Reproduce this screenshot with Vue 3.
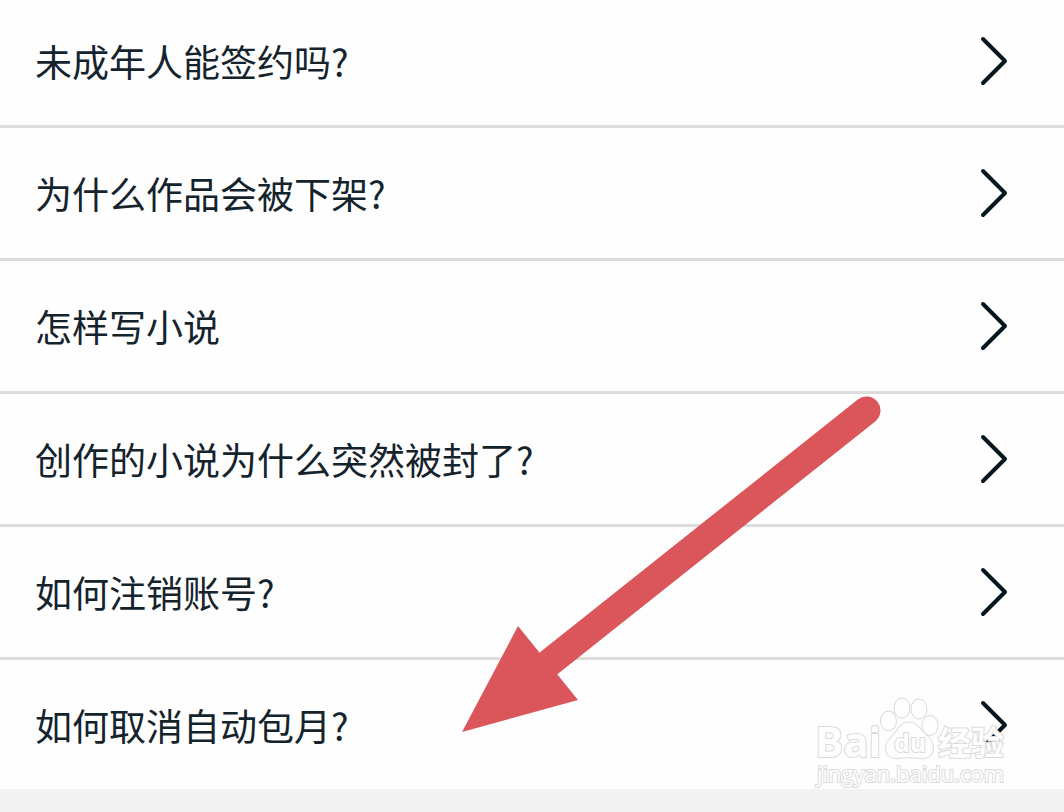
<script setup>
const questions = [
  '未成年人能签约吗?',
  '为什么作品会被下架?',
  '怎样写小说',
  '创作的小说为什么突然被封了?',
  '如何注销账号?',
  '如何取消自动包月?',
]
</script>

<template>
  <main class="page">
    <ul class="list">
      <li v-for="question in questions" :key="question" class="item">
        <a class="row" href="#">
          <span class="label">{{ question }}</span>
          <svg class="chevron" viewBox="0 0 28 48" aria-hidden="true">
            <path d="M3 2 L25 24 L3 46" />
          </svg>
        </a>
      </li>
    </ul>

    <svg class="pointer" viewBox="0 0 420 337" aria-hidden="true">
      <path class="shaft" d="M87 268 L404.5 15.5" />
      <path class="head" d="M0 337 L56 231 L77 257 L95 279 L116 305 Z" />
    </svg>

    <svg class="watermark" viewBox="0 0 200 104" role="img" aria-label="Baidu 经验">
      <ellipse cx="76.5" cy="29" rx="7.5" ry="9.5" />
      <ellipse cx="90" cy="16" rx="7.5" ry="9.5" />
      <ellipse cx="107" cy="17" rx="7.5" ry="9.5" />
      <ellipse cx="118" cy="33.5" rx="7.5" ry="9.5" />
      <path d="M97 30.5 C103 30.5 107 35 110 39 C114 44 121 47 121 56 C121 63 115 67 108 66 C100 65 94 65 87 66 C79 67 74 63 74 56 C74 48 81 45 84 40 C87 35 91 30.5 97 30.5 Z" />
      <text class="brand" x="3" y="65">Bai</text>
      <text class="du" x="82" y="60">du</text>
      <text class="brand-cn" x="126" y="63">经验</text>
      <text class="site" x="5" y="90">jingyan.baidu.com</text>
    </svg>
  </main>
</template>

<style>
body {
  background: #f3f3f3;
}
</style>

<style scoped>
.page {
  position: relative;
  font-family: "Noto Sans CJK SC", sans-serif;
  overflow: hidden;
}

.list {
  margin: 0;
  padding: 0;
  list-style: none;
  background: #fefefe;
}

.item + .item {
  border-top: 3px solid #dcdcdc;
}

.row {
  display: flex;
  align-items: center;
  justify-content: space-between;
  box-sizing: border-box;
  min-height: 130px;
  padding: 0 56px 0 35px;
  color: #14232c;
  text-decoration: none;
}

.item:first-child .row {
  min-height: 125px;
  padding-bottom: 4px;
}

.item:last-child .row {
  min-height: 129px;
}

.label {
  font-size: 37px;
  line-height: 54px;
}

.chevron {
  flex: none;
  width: 28px;
  height: 48px;
  overflow: visible;
  fill: none;
  stroke: #06161e;
  stroke-width: 4;
  stroke-linecap: round;
  stroke-linejoin: round;
}

.pointer {
  position: absolute;
  top: 395px;
  left: 462px;
  width: 420px;
  height: 337px;
  pointer-events: none;
}

.shaft {
  fill: none;
  stroke: #db565b;
  stroke-width: 28;
  stroke-linecap: round;
}

.head {
  fill: #db565b;
}

.watermark {
  position: absolute;
  right: 52px;
  bottom: -7px;
  width: 200px;
  height: 104px;
  overflow: visible;
  pointer-events: none;
  fill: #fefefe;
  stroke: #dadada;
  stroke-width: 2;
  paint-order: stroke;
}

.brand {
  font: bold 42px "Open Sans", sans-serif;
}

.du {
  font: bold 25px "Open Sans", sans-serif;
}

.brand-cn {
  font: bold 33px "Noto Sans CJK SC", sans-serif;
}

.site {
  font: 22px "Open Sans", sans-serif;
}
</style>
